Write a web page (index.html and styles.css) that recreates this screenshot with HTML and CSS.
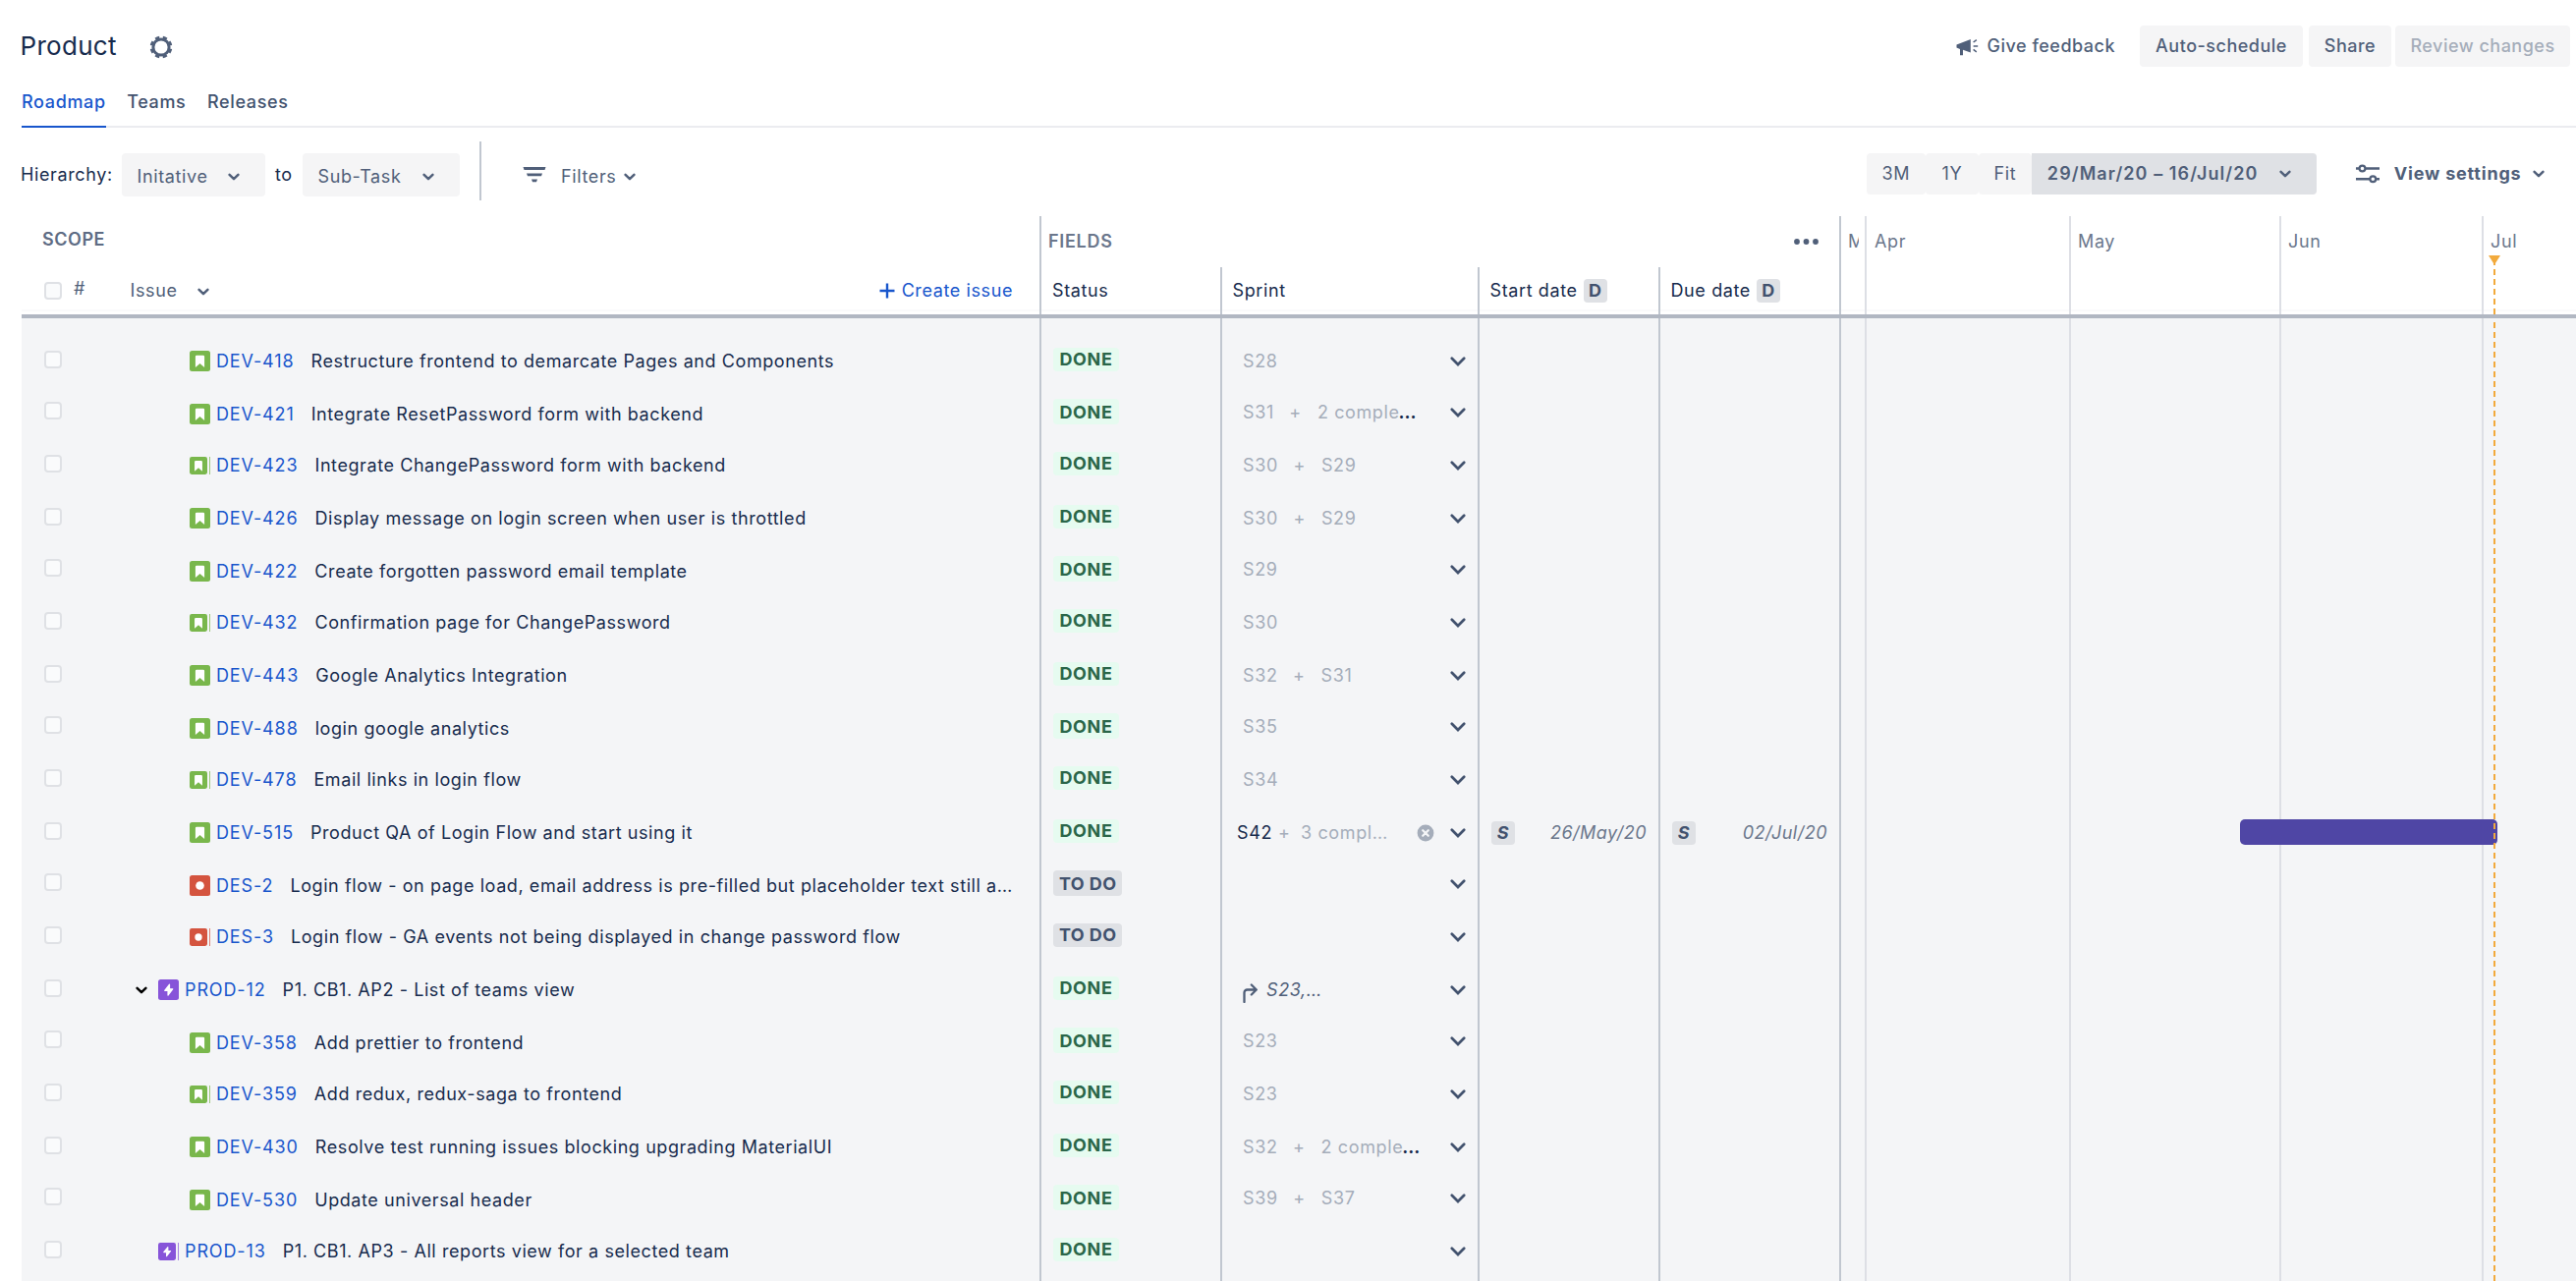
FILE: index.html
```html
<!DOCTYPE html>
<html lang="en">
<head>
<meta charset="utf-8">
<title>Product roadmap</title>
<link rel="stylesheet" href="styles.css">
</head>
<body>
<svg class="sprite" aria-hidden="true">
  <symbol id="chev" viewBox="0 0 12 8"><path d="M1.6 1.8 6 6.1l4.4-4.3" fill="none" stroke="currentColor" stroke-width="2.5" stroke-linecap="round" stroke-linejoin="round"/></symbol>
  <symbol id="chev-lg" viewBox="0 0 16 10"><path d="M1.8 1.7 8 8l6.200-6.300" fill="none" stroke="currentColor" stroke-width="2.7" stroke-linecap="round" stroke-linejoin="miter"/></symbol>
  <symbol id="story" viewBox="0 0 21 21"><rect width="21" height="21" rx="2.500" fill="#79b74c"/><path d="M7.200 4.800h6.600a1.300 1.300 0 0 1 1.300 1.300v11l-4.600-4-4.600 4v-11a1.300 1.300 0 0 1 1.300-1.300z" fill="#fff"/></symbol>
  <symbol id="bug" viewBox="0 0 21 21"><rect width="21" height="21" rx="2.500" fill="#d4543f"/><circle cx="10.500" cy="10.500" r="4.300" fill="#fff"/></symbol>
  <symbol id="epic" viewBox="0 0 21 21"><rect width="21" height="21" rx="2.500" fill="#8754d9"/><path d="M11.500 5.200 6.700 11.300H10v4.800l4.700-6.300h-3.200z" fill="#fff" stroke="#fff" stroke-width="1.200" stroke-linejoin="round"/></symbol>
</svg>

<header class="top">
  <h1>Product</h1>
  <svg class="gear" viewBox="-12 -12 24 24"><circle r="8.100" fill="none" stroke="currentColor" stroke-width="3"/><circle r="9.900" fill="none" stroke="currentColor" stroke-width="2.900" pathLength="80" stroke-dasharray="5.600 4.400" transform="rotate(10)"/></svg>
  <div class="actions">
    <a class="feedback"><svg viewBox="0 0 24 20"><path d="M.5 7.600 14.800 2v13.400L7 12.700v5.500H4V12L.5 10.600z" fill="currentColor"/><path d="m17.600 5 3.200-2.400M17.600 9h4.600M17.600 12.400l3.200 2.400" stroke="currentColor" stroke-width="1.500" fill="none"/></svg>Give feedback</a>
    <button class="btn auto">Auto-schedule</button>
    <button class="btn share">Share</button>
    <button class="btn review" disabled>Review changes</button>
  </div>
</header>

<nav class="tabs"><a class="on">Roadmap</a><a>Teams</a><a>Releases</a></nav>

<section class="toolbar">
  <span class="label">Hierarchy:</span>
  <button class="select from">Initative<svg class="chev"><use href="#chev"/></svg></button>
  <span class="label to">to</span>
  <button class="select till">Sub-Task<svg class="chev"><use href="#chev"/></svg></button>
  <i class="rule"></i>
  <button class="filters"><svg class="funnel" viewBox="0 0 24 18"><path d="M.5 1h23l-1 3h-21zM4 7.500h16l-1 2.800H5zM9 13.500h6l-1 2.700h-4z" fill="currentColor"/></svg>Filters<svg class="chev"><use href="#chev"/></svg></button>
  <div class="range"><button>3M</button><button>1Y</button><button>Fit</button><button class="dates">29/Mar/20 – 16/Jul/20<svg class="chev"><use href="#chev"/></svg></button></div>
  <button class="view"><svg class="sliders" viewBox="0 0 24 20" fill="none" stroke="currentColor" stroke-width="2.600"><path d="M0 4.500h3.500M9.500 4.500H24M0 15.200h14M20.500 15.200H24"/><circle cx="6.500" cy="4.500" r="2.900" stroke-width="2.200"/><circle cx="17.300" cy="15.200" r="2.900" stroke-width="2.200"/></svg>View settings<svg class="chev"><use href="#chev"/></svg></button>
</section>

<main class="board">
  <div class="head">
    <div class="scope-head">
      <div class="caps">SCOPE</div>
      <div class="issue-head"><i class="check"></i><span class="num">#</span><span>Issue</span><svg class="chev"><use href="#chev"/></svg>
        <a class="create"><svg viewBox="0 0 16 16"><path d="M8 .5v15M.5 8h15" stroke="currentColor" stroke-width="2.400"/></svg>Create issue</a></div>
    </div>
    <div class="fields-head">
      <div class="caps">FIELDS<svg class="dots" viewBox="0 0 26 6"><circle cx="3" cy="3" r="2.900"/><circle cx="12.500" cy="3" r="2.900"/><circle cx="22" cy="3" r="2.900"/></svg></div>
      <div class="cols"><span>Status</span><span>Sprint</span><span>Start date<b>D</b></span><span>Due date<b>D</b></span></div>
    </div>
    <div class="months"><span class="cut"><em>M</em></span><span>Apr</span><span>May</span><span>Jun</span><span>Jul</span><i class="flag"></i><i class="today"></i></div>
  </div>

  <div class="body">
    <div class="rows">
      <div class="row"><div class="issue"><i class="check"></i><svg class="type"><use href="#story"/></svg><a>DEV-418</a><p>Restructure frontend to demarcate Pages and Components</p></div><div class="st"><b class="done">DONE</b></div><div class="sp"><s>S28</s><svg class="chev-lg"><use href="#chev-lg"/></svg></div><div></div><div></div></div>
      <div class="row"><div class="issue"><i class="check"></i><svg class="type"><use href="#story"/></svg><a>DEV-421</a><p>Integrate ResetPassword form with backend</p></div><div class="st"><b class="done">DONE</b></div><div class="sp"><s>S31</s><s class="plus">+</s><s>2 comple</s><strong>…</strong><svg class="chev-lg"><use href="#chev-lg"/></svg></div><div></div><div></div></div>
      <div class="row"><div class="issue"><i class="check"></i><svg class="type"><use href="#story"/></svg><a>DEV-423</a><p>Integrate ChangePassword form with backend</p></div><div class="st"><b class="done">DONE</b></div><div class="sp"><s>S30</s><s class="plus">+</s><s>S29</s><svg class="chev-lg"><use href="#chev-lg"/></svg></div><div></div><div></div></div>
      <div class="row"><div class="issue"><i class="check"></i><svg class="type"><use href="#story"/></svg><a>DEV-426</a><p>Display message on login screen when user is throttled</p></div><div class="st"><b class="done">DONE</b></div><div class="sp"><s>S30</s><s class="plus">+</s><s>S29</s><svg class="chev-lg"><use href="#chev-lg"/></svg></div><div></div><div></div></div>
      <div class="row"><div class="issue"><i class="check"></i><svg class="type"><use href="#story"/></svg><a>DEV-422</a><p>Create forgotten password email template</p></div><div class="st"><b class="done">DONE</b></div><div class="sp"><s>S29</s><svg class="chev-lg"><use href="#chev-lg"/></svg></div><div></div><div></div></div>
      <div class="row"><div class="issue"><i class="check"></i><svg class="type"><use href="#story"/></svg><a>DEV-432</a><p>Confirmation page for ChangePassword</p></div><div class="st"><b class="done">DONE</b></div><div class="sp"><s>S30</s><svg class="chev-lg"><use href="#chev-lg"/></svg></div><div></div><div></div></div>
      <div class="row"><div class="issue"><i class="check"></i><svg class="type"><use href="#story"/></svg><a>DEV-443</a><p>Google Analytics Integration</p></div><div class="st"><b class="done">DONE</b></div><div class="sp"><s>S32</s><s class="plus">+</s><s>S31</s><svg class="chev-lg"><use href="#chev-lg"/></svg></div><div></div><div></div></div>
      <div class="row"><div class="issue"><i class="check"></i><svg class="type"><use href="#story"/></svg><a>DEV-488</a><p>login google analytics</p></div><div class="st"><b class="done">DONE</b></div><div class="sp"><s>S35</s><svg class="chev-lg"><use href="#chev-lg"/></svg></div><div></div><div></div></div>
      <div class="row"><div class="issue"><i class="check"></i><svg class="type"><use href="#story"/></svg><a>DEV-478</a><p>Email links in login flow</p></div><div class="st"><b class="done">DONE</b></div><div class="sp"><s>S34</s><svg class="chev-lg"><use href="#chev-lg"/></svg></div><div></div><div></div></div>
      <div class="row"><div class="issue"><i class="check"></i><svg class="type"><use href="#story"/></svg><a>DEV-515</a><p>Product QA of Login Flow and start using it</p></div><div class="st"><b class="done">DONE</b></div><div class="sp active">S42<s class="plus">+</s><s>3 compl…</s><svg class="clear" viewBox="0 0 18 18"><circle cx="9" cy="9" r="8.400" fill="#a5adba"/><path d="m6.200 6.200 5.600 5.600m0-5.600-5.600 5.600" stroke="#f4f5f7" stroke-width="2.200" stroke-linecap="round"/></svg><svg class="chev-lg"><use href="#chev-lg"/></svg></div><div class="date"><b>S</b>26/May/20</div><div class="date"><b>S</b>02/Jul/20</div></div>
      <div class="row"><div class="issue"><i class="check"></i><svg class="type bug"><use href="#bug"/></svg><a>DES-2</a><p>Login flow - on page load, email address is pre-filled but placeholder text still a…</p></div><div class="st"><b>TO DO</b></div><div class="sp"><svg class="chev-lg"><use href="#chev-lg"/></svg></div><div></div><div></div></div>
      <div class="row"><div class="issue"><i class="check"></i><svg class="type bug"><use href="#bug"/></svg><a>DES-3</a><p>Login flow - GA events not being displayed in change password flow</p></div><div class="st"><b>TO DO</b></div><div class="sp"><svg class="chev-lg"><use href="#chev-lg"/></svg></div><div></div><div></div></div>
      <div class="row parent"><div class="issue"><i class="check"></i><svg class="chev toggle"><use href="#chev"/></svg><svg class="type"><use href="#epic"/></svg><a>PROD-12</a><p>P1. CB1. AP2 - List of teams view</p></div><div class="st"><b class="done">DONE</b></div><div class="sp"><svg class="rollup" viewBox="0 0 16 20"><path d="M1.500 19V9.500a3 3 0 0 1 3-3H13M8.800 1.500 13.800 6.500l-5 5" fill="none" stroke="currentColor" stroke-width="2.300" stroke-linecap="round" stroke-linejoin="round"/></svg><em>S23,…</em><svg class="chev-lg"><use href="#chev-lg"/></svg></div><div></div><div></div></div>
      <div class="row"><div class="issue"><i class="check"></i><svg class="type"><use href="#story"/></svg><a>DEV-358</a><p>Add prettier to frontend</p></div><div class="st"><b class="done">DONE</b></div><div class="sp"><s>S23</s><svg class="chev-lg"><use href="#chev-lg"/></svg></div><div></div><div></div></div>
      <div class="row"><div class="issue"><i class="check"></i><svg class="type"><use href="#story"/></svg><a>DEV-359</a><p>Add redux, redux-saga to frontend</p></div><div class="st"><b class="done">DONE</b></div><div class="sp"><s>S23</s><svg class="chev-lg"><use href="#chev-lg"/></svg></div><div></div><div></div></div>
      <div class="row"><div class="issue"><i class="check"></i><svg class="type"><use href="#story"/></svg><a>DEV-430</a><p>Resolve test running issues blocking upgrading MaterialUI</p></div><div class="st"><b class="done">DONE</b></div><div class="sp"><s>S32</s><s class="plus">+</s><s>2 comple</s><strong>…</strong><svg class="chev-lg"><use href="#chev-lg"/></svg></div><div></div><div></div></div>
      <div class="row"><div class="issue"><i class="check"></i><svg class="type"><use href="#story"/></svg><a>DEV-530</a><p>Update universal header</p></div><div class="st"><b class="done">DONE</b></div><div class="sp"><s>S39</s><s class="plus">+</s><s>S37</s><svg class="chev-lg"><use href="#chev-lg"/></svg></div><div></div><div></div></div>
      <div class="row parent"><div class="issue"><i class="check"></i><svg class="type epic"><use href="#epic"/></svg><a>PROD-13</a><p>P1. CB1. AP3 - All reports view for a selected team</p></div><div class="st"><b class="done">DONE</b></div><div class="sp"><svg class="chev-lg"><use href="#chev-lg"/></svg></div><div></div><div></div></div>
    </div>
    <div class="months lanes"><span></span><span></span><span></span><span></span><span></span><i class="bar"></i><i class="today"></i></div>
  </div>
</main>
</body>
</html>
```
FILE: styles.css
```css
* { box-sizing: border-box; }

body {
  margin: 0;
  width: 2622px;
  height: 1304px;
  overflow: hidden;
  display: flex;
  flex-direction: column;
  background: #fff;
  color: #172b4d;
  font: 400 18px/24px Inter, "Liberation Sans", sans-serif;
  letter-spacing: .62px;
}

.sprite { display: none; }
svg { display: block; flex: none; }
h1, p { margin: 0; }
i, em { font-style: normal; }
s { text-decoration: none; }

button {
  border: 0;
  margin: 0;
  padding: 0;
  background: none;
  color: #505f79;
  font: inherit;
  letter-spacing: inherit;
  display: flex;
  align-items: center;
}

.chev { width: 12px; height: 8px; }
.chev-lg { width: 16px; height: 10px; color: #42526e; }

/* Title bar */
.top { display: flex; align-items: center; height: 94px; padding: 0 6px 0 20.500px; color: #505f79; flex: none; }
.top h1 { font-size: 26px; font-weight: 400; letter-spacing: .3px; color: #172b4d; width: 131px; }
.gear { width: 24px; height: 24px; margin-top: 1px; }
.actions { margin-left: auto; display: flex; font-weight: 500; letter-spacing: .5px; }
.feedback { display: flex; align-items: center; margin-right: 25px; }
.feedback svg { width: 24px; height: 20px; margin: 2px 7.500px 0 0; }
.btn { height: 42px; border-radius: 4px; background: #f5f5f6; justify-content: center; }
.auto { width: 166px; margin-right: 6px; }
.share { width: 84px; margin-right: 4px; }
.review { width: 178px; color: #a5adba; }

/* Tabs */
.tabs { display: flex; gap: 21.500px; height: 36px; margin-left: 22px; flex: none; border-bottom: 2px solid #ebecf0; font-weight: 500; color: #42526e; letter-spacing: .65px; }
.tabs a { height: 36px; padding-bottom: 14px; line-height: 20px; }
.tabs .on { color: #1856cc; border-bottom: 2px solid #1856cc; }

/* Toolbar */
.toolbar { display: flex; align-items: flex-start; height: 90px; padding: 26px 0 0 21px; flex: none; }
.label { line-height: 43px; width: 103px; }
.label.to { width: 28px; margin-left: 10px; }
.select { height: 44px; border-radius: 4px; background: #f5f5f6; padding: 3px 26px 0 15.500px; justify-content: space-between; }
.from { width: 146px; }
.till { width: 160px; }
.rule { width: 2px; height: 60px; margin: -12px 42px 0 20px; background: #c1c7d0; }
.filters { height: 44px; padding-top: 3px; }
.funnel { width: 24px; height: 18px; margin: -3px 15px 0 0; }
.filters .chev { margin-left: 8px; }
.range { display: flex; margin-left: auto; }
.range button { height: 42px; width: 54px; background: #f5f5f6; border-radius: 4px; justify-content: center; }
.range button:first-child { width: 60px; }
.range .dates { width: 290px; background: #dfe1e5; border-radius: 0 4px 4px 0; font-weight: 600; letter-spacing: 1.080px; justify-content: space-between; padding: 0 26px 0 16px; }
.view { height: 42px; margin: 0 32px 0 40px; font-weight: 700; letter-spacing: .8px; }
.sliders { width: 24px; height: 20px; margin-right: 15px; }
.view .chev { margin-left: 11.500px; }

/* Board header */
.board { flex: 1; margin-left: 22px; display: flex; flex-direction: column; min-height: 0; }
.head { display: flex; height: 104px; flex: none; border-bottom: 4px solid #b1b7c2; box-shadow: inset 0 -3px #fff, inset 0 -5px #fafafb; }
.caps { height: 52px; font-weight: 600; color: #6b778c; display: flex; align-items: center; letter-spacing: .55px; }
.scope-head { width: 1036px; color: #505f79; }
.scope-head .caps { padding: 0 0 4px 21px; color: #5e6c84; }
.issue-head { height: 48px; display: flex; align-items: center; padding-left: 23px; }
.issue-head .num { margin: -4px 45.500px 0 12px; }
.issue-head .chev { margin: 1px 0 0 20px; }
.create { display: flex; align-items: center; margin: 0 27px 0 auto; color: #1856cc; letter-spacing: .6px; }
.create svg { width: 16px; height: 16px; margin-right: 7px; }
.check { width: 18px; height: 18px; flex: none; border: 2px solid #dfe1e5; border-radius: 4px; background: #fafbfc; }
.fields-head { width: 814px; border-left: 2px solid #c1c7d0; }
.fields-head .caps { padding: 0 20px 0 7px; letter-spacing: .7px; }
.dots { width: 26px; height: 6px; margin-left: auto; fill: #505f79; }
.cols { display: grid; grid-template-columns: 182px 262px 184px 184px; height: 48px; }
.cols span { display: flex; align-items: center; border-left: 2px solid #c1c7d0; padding-left: 10.500px; }
.cols span:first-child { border: 0; padding-left: 11px; }
.cols b { width: 24px; height: 24px; margin-left: 6px; border-radius: 4px; background: #dfe1e5; color: #42526e; font-weight: 700; text-align: center; }

/* Timeline */
.months { position: relative; flex: 1; display: grid; grid-template-columns: 26px 208px 214px 206px 1fr; color: #6b778c; }
.months span { border-left: 2px solid #dddfe5; padding: 14px 0 0 7px; overflow: hidden; }
.months span:nth-child(2) { padding-left: 8px; }
.months span:first-child { border-color: #c1c7d0; }
.months .cut em { display: block; width: 11px; overflow: hidden; }
.today { position: absolute; left: 666px; top: 44px; bottom: 0; width: 2px; background: repeating-linear-gradient(#f2aa3c 0 6px, transparent 6px 10px); }
.flag { position: absolute; left: 661px; top: 40px; width: 12px; height: 8px; background: #f2aa3c; clip-path: polygon(0 0, 100% 0, 58% 100%, 42% 100%); }
.lanes .today { top: 4px; }
.bar { position: absolute; left: 408px; top: 510px; width: 262px; height: 26px; border-radius: 5px; background: #4f46a5; }

/* Issue rows */
.body { flex: 1; display: flex; min-height: 0; background: #f4f5f7; overflow: hidden; }
.rows { width: 1850px; }
.row { display: grid; grid-template-columns: 1036px 184px 262px 184px 184px; height: 54px; }
.row:nth-child(3n+1) { height: 52px; }
.row > div { display: flex; align-items: center; height: 54px; padding-bottom: 2px; border-left: 2px solid #c1c7d0; }
.row:nth-child(3n+1) > div { height: 52px; padding-bottom: 0; }
.row:first-child, .row:first-child > div { height: 68px !important; }
.row:first-child > div { padding-top: 16px; }
.row:last-child, .row:last-child > div { height: 58px; }
.row:last-child > div { padding-bottom: 6px; }
.row > .issue { border: 0; padding-left: 23px; }
.issue .type { width: 21px; height: 21px; margin: 3px 6px 0 130px; }
.issue a { color: #1856cc; letter-spacing: .88px; margin: 3px 17px 0 0; }
.issue p { white-space: nowrap; margin-top: 3px; letter-spacing: .58px; }
.row:nth-child(3n+2) .type, .row:nth-child(3n+2) a, .row:nth-child(3n+2) p { margin-top: 7px; }
.row:nth-child(3n) .type { height: 18px; padding-right: 3px; background: linear-gradient(#9bc97a, #9bc97a) right / 1px 100% no-repeat; }
.row:nth-child(3n) .bug { background-image: linear-gradient(#df8273, #df8273); }
.row:nth-child(3n) .epic { background-image: linear-gradient(#a584e2, #a584e2); }
.parent .issue .type { margin-left: 98px; }
.issue .toggle { margin: 3px 0 0 75px; color: #000; }
.issue .toggle + .type { margin-left: 11px !important; }

.st { padding-left: 12px; }
.st b { height: 24px; border-radius: 4px; padding: 0 6px; background: #dfe1e5; color: #42526e; font-weight: 700; letter-spacing: .4px; }
.st .done { background: #e6fbf0; color: #2a6649; padding: 0 6.500px; letter-spacing: .6px; }
.row:nth-child(3n+2) .st b { height: 26px; line-height: 27px; margin-top: 2px; }

.row > .sp { padding-left: 21px; }
.sp > * { margin-top: 3px; }
.sp s { color: #a5adba; margin-top: 3px; }
.sp strong { font-weight: 700; margin-left: -1px; }
.sp .plus { margin: 3px 16px 0 15.500px; }
.sp .chev-lg { margin: 3px 12px 0 auto; }
.row > .active { padding: 3px 0 0 15px; }
.sp.active > * { margin-top: 0; }
.sp.active .plus { margin: 0 10.500px 0 6px; }
.sp .clear { width: 18px; height: 18px; margin-left: auto; }
.sp.active .chev-lg { margin: 0 12px 0 16px; }
.rollup { width: 16px; height: 20px; color: #505f79; margin: 10px 8px 0 0 !important; }
.sp em { font-style: italic; color: #505f79; }

.row > .date { justify-content: space-between; padding: 3px 12px 0; font-style: italic; color: #6b778c; letter-spacing: .5px; }
.date b { width: 24px; height: 24px; border-radius: 4px; background: #dfe1e5; color: #42526e; text-align: center; }
```
